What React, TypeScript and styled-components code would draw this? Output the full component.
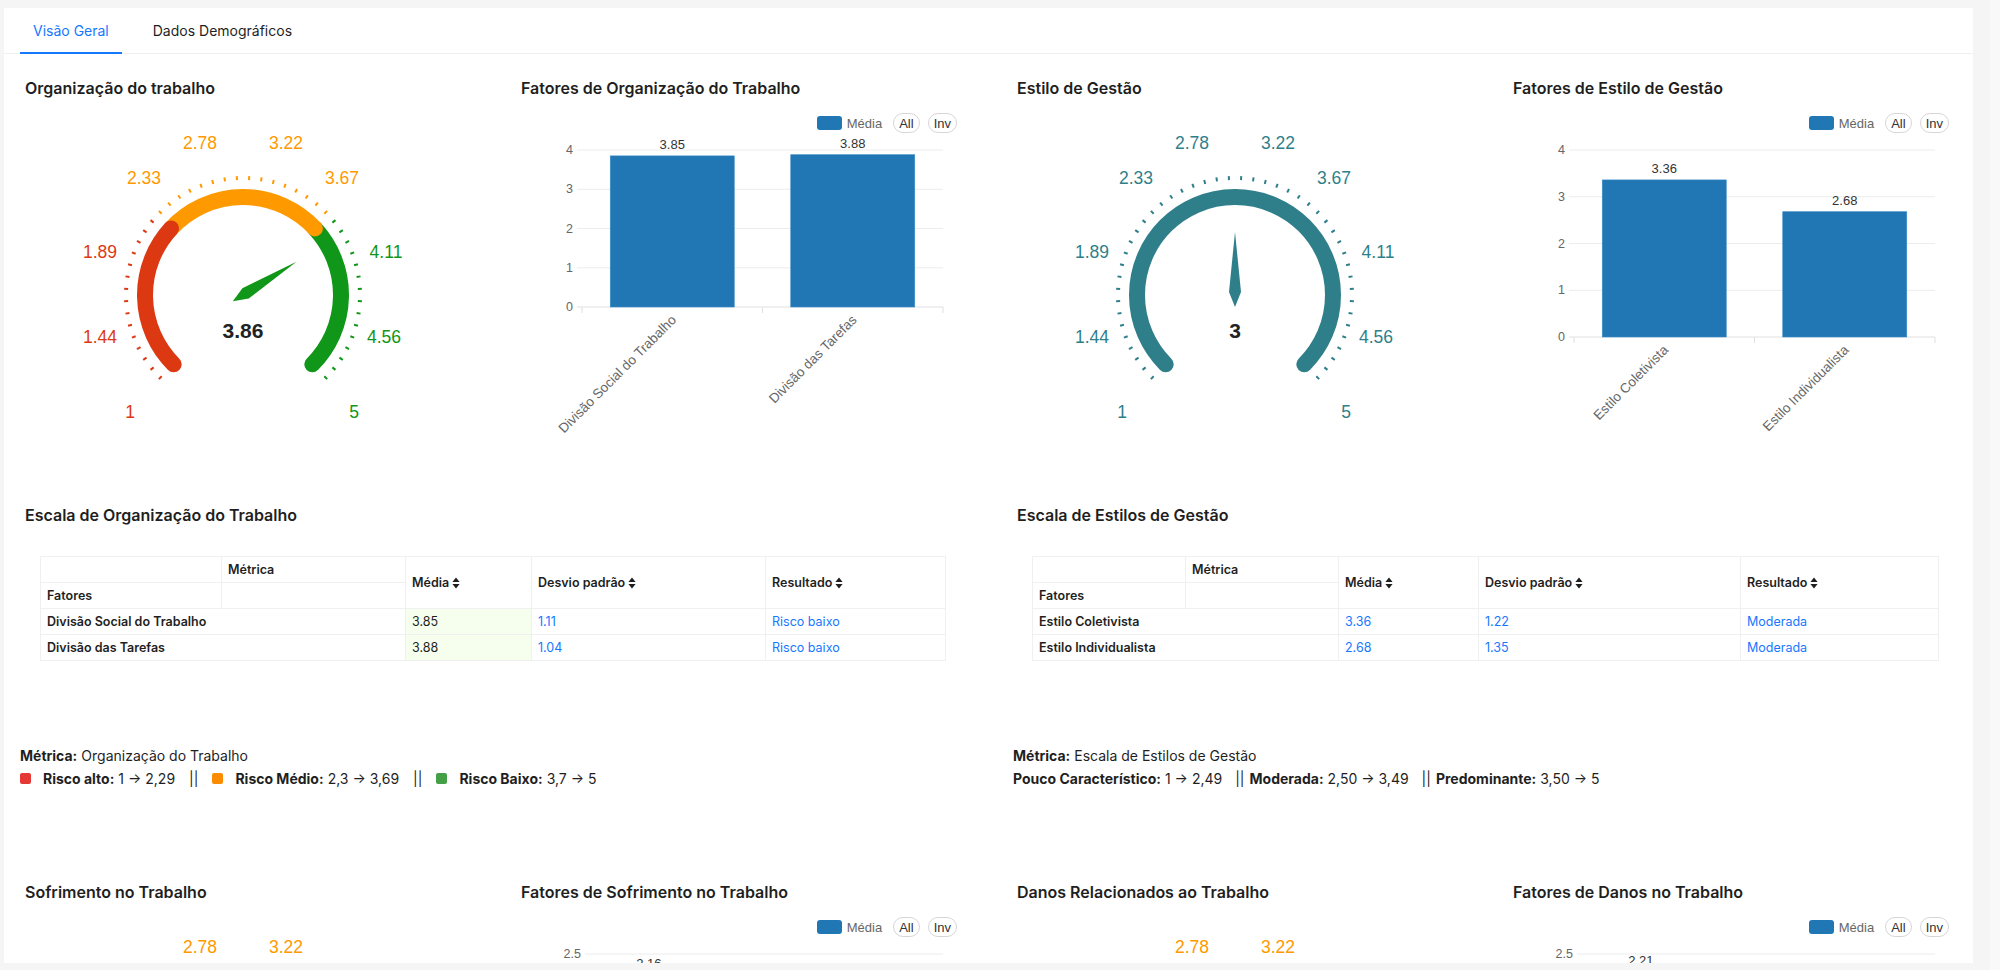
import React from "react";
import styled, { createGlobalStyle, css } from "styled-components";

const CHART_FONT = `"Liberation Sans", Arial, sans-serif`;

const GlobalStyle = createGlobalStyle`
  html, body {
    margin: 0;
    padding: 0;
    background: #f5f5f5;
    overflow: hidden;
  }
  body {
    font-family: Inter, "Liberation Sans", sans-serif;
    color: #1f1f1f;
  }
`;

const Page = styled.div`
  display: flex;
  height: 970px;
`;

const Card = styled.main`
  flex-shrink: 0;
  width: 1969px;
  height: 955px;
  margin: 8px 0 0 4px;
  background: #fff;
  overflow: hidden;
`;

const Gutter = styled.div`
  flex: 1;
`;

const ScrollTrack = styled.div`
  width: 10px;
  background: #f9f9f9;
`;

const TabBar = styled.nav`
  display: flex;
  gap: 18px;
  height: 46px;
  padding-left: 16px;
  border-bottom: 1px solid #f0f0f0;
  box-sizing: border-box;
`;

const Tab = styled.div<{ $active?: boolean }>`
  position: relative;
  display: flex;
  align-items: center;
  padding: 0 13px;
  font-size: 14px;
  color: ${(p) => (p.$active ? "#1677ff" : "#1f1f1f")};
  cursor: pointer;
  ${(p) =>
    p.$active &&
    css`
      &::after {
        content: "";
        position: absolute;
        left: 0;
        right: 0;
        bottom: -1px;
        height: 2px;
        background: #1677ff;
      }
    `}
`;

const Content = styled.div`
  padding: 23px 24px 0 21px;
`;

const Row = styled.section<{ $top: number }>`
  display: grid;
  grid-template-columns: repeat(4, 436px);
  column-gap: 60px;
  margin-top: ${(p) => p.$top}px;
`;

const Panel = styled.div`
  display: flex;
  flex-direction: column;
`;

const Wide = styled.div`
  grid-column: span 2;
`;

const Title = styled.h3`
  margin: 0;
  font-size: 16px;
  font-weight: 600;
  line-height: 22px;
  color: #1f1f1f;
  white-space: nowrap;
`;

const LegendRow = styled.div`
  display: flex;
  justify-content: flex-end;
  align-items: center;
  height: 20px;
  margin-top: 14px;
  font-family: ${CHART_FONT};
`;

const Swatch = styled.span`
  width: 25px;
  height: 14px;
  border-radius: 3px;
  background: #2176b4;
`;

const LegendLabel = styled.span`
  margin: 0 11px 0 5px;
  font-size: 13px;
  color: #666;
`;

const Pill = styled.button`
  height: 20px;
  padding: 0 5px;
  margin-left: 8px;
  border: 1px solid #d6d6d6;
  border-radius: 10px;
  background: #fff;
  font-family: ${CHART_FONT};
  font-size: 13px;
  color: #333;
  &:first-of-type {
    margin-left: 0;
  }
`;

const ChartSvg = styled.svg`
  display: block;
  overflow: visible;
`;

const Table = styled.table`
  border-collapse: collapse;
  margin: 30px 0 0 15px;
  font-size: 12.5px;
  table-layout: fixed;
`;

const Col = styled.col<{ $w: number }>`
  width: ${(p) => p.$w}px;
`;

const HeadCell = styled.th`
  height: 26px;
  padding: 0 6px;
  border: 1px solid #f0f0f0;
  text-align: left;
  font-weight: 600;
  color: #1f1f1f;
  white-space: nowrap;
  box-sizing: border-box;
`;

const Cell = styled.td<{ $tone?: "link" | "hit" | "name" }>`
  height: 26px;
  padding: 0 6px;
  border: 1px solid #f0f0f0;
  white-space: nowrap;
  box-sizing: border-box;
  color: ${(p) => (p.$tone === "link" ? "#1677ff" : "#1f1f1f")};
  font-weight: ${(p) => (p.$tone === "name" ? 600 : 400)};
  background: ${(p) => (p.$tone === "hit" ? "#f6ffed" : "#fff")};
`;

const SortWrap = styled.span`
  display: inline-flex;
  align-items: center;
  gap: 3px;
`;

const Note = styled.div<{ $shift: number }>`
  margin: 83px 0 0 ${(p) => p.$shift}px;
  font-size: 14px;
  line-height: 23px;
  white-space: nowrap;
  color: #1f1f1f;
`;

const NoteLine = styled.div`
  display: flex;
  align-items: center;
  b {
    font-weight: 700;
    margin-right: 4px;
  }
`;

const Sep = styled.span<{ $l: number; $r: number }>`
  margin: 0 ${(p) => p.$r}px 0 ${(p) => p.$l}px;
  color: #1f1f1f;
`;

const RiskSquare = styled.span<{ $c: string }>`
  display: inline-block;
  width: 11px;
  height: 11px;
  margin-right: 12px;
  border-radius: 2px;
  background: ${(p) => p.$c};
`;

type Seg = { to: number; color: string };

const RISK: Seg[] = [
  { to: 2.3, color: "#DC3912" },
  { to: 3.7, color: "#FF9900" },
  { to: 5, color: "#109618" },
];
const TEAL: Seg[] = [{ to: 5, color: "#2F7F8B" }];

const GAUGE_LABELS = ["1", "1.44", "1.89", "2.33", "2.78", "3.22", "3.67", "4.11", "4.56", "5"];
const LABEL_OFFSETS = [
  [-113, 117],
  [-143, 42],
  [-143, -43],
  [-99, -117],
  [-43, -152],
  [43, -152],
  [99, -117],
  [143, -43],
  [141, 42],
  [111, 117],
];

const angleOf = (v: number) => 225 - ((v - 1) / 4) * 270;

function polar(cx: number, cy: number, r: number, deg: number) {
  const a = (deg * Math.PI) / 180;
  return [cx + r * Math.cos(a), cy - r * Math.sin(a)];
}

function arcPath(cx: number, cy: number, r: number, v1: number, v2: number) {
  const a1 = angleOf(v1);
  const a2 = angleOf(v2);
  const [x1, y1] = polar(cx, cy, r, a1);
  const [x2, y2] = polar(cx, cy, r, a2);
  const large = a1 - a2 > 180 ? 1 : 0;
  return `M ${x1} ${y1} A ${r} ${r} 0 ${large} 1 ${x2} ${y2}`;
}

function colorFor(segs: Seg[], v: number) {
  return (segs.find((s) => v < s.to - 1e-6) ?? segs[segs.length - 1]).color;
}

function Gauge({ value, segs }: { value: number; segs: Seg[] }) {
  const cx = 218;
  const cy = 196;
  const a = (angleOf(value) * Math.PI) / 180;
  const d = [Math.cos(a), -Math.sin(a)];
  const p = [Math.sin(a), Math.cos(a)];
  const pt = (along: number, side: number) =>
    `${cx + d[0] * along + p[0] * side},${cy + d[1] * along + p[1] * side}`;
  const pointer = [pt(63, 0), pt(3, 6), pt(-12, 0), pt(3, -6)].join(" ");

  const ticks = Array.from({ length: 46 }, (_, k) => 1 + (k * 4) / 45);
  let from = 1;
  const arcs = segs.map((s) => {
    const seg = { from, to: s.to, color: s.color };
    from = s.to;
    return seg;
  });

  return (
    <ChartSvg width={436} height={380}>
      {[...arcs].reverse().map((s) => (
        <path
          key={s.to}
          d={arcPath(cx, cy, 98, s.from, s.to)}
          fill="none"
          stroke={s.color}
          strokeWidth={16}
          strokeLinecap="round"
        />
      ))}
      {ticks.map((v) => {
        const [x1, y1] = polar(cx, cy, 115, angleOf(v));
        const [x2, y2] = polar(cx, cy, 119, angleOf(v));
        return <line key={v} x1={x1} y1={y1} x2={x2} y2={y2} stroke={colorFor(segs, v)} strokeWidth={2} />;
      })}
      {GAUGE_LABELS.map((l, i) => (
        <text
          key={l}
          x={cx + LABEL_OFFSETS[i][0]}
          y={cy + LABEL_OFFSETS[i][1]}
          textAnchor="middle"
          dominantBaseline="central"
          fontFamily={CHART_FONT}
          fontSize={17.5}
          fill={colorFor(segs, parseFloat(l))}
        >
          {l}
        </text>
      ))}
      <polygon points={pointer} fill={colorFor(segs, value)} />
      <text
        x={cx}
        y={cy + 35}
        textAnchor="middle"
        dominantBaseline="central"
        fontFamily={CHART_FONT}
        fontSize={21}
        fontWeight={700}
        fill="#222"
      >
        {value}
      </text>
    </ChartSvg>
  );
}

type Bar = { label: string; value: number };
type ChartProps = { bars: Bar[]; max: number; step: number; zeroY: number; left: number };

function BarChart({ bars, max, step, zeroY, left }: ChartProps) {
  const top = 17;
  const right = 422;
  const y = (v: number) => zeroY - (v / max) * (zeroY - top);
  const cw = (right - left) / bars.length;
  const bw = Math.min(124, cw * 0.687);
  const ticks: number[] = [];
  for (let t = 0; t <= max + 1e-9; t += step) ticks.push(+t.toFixed(2));

  return (
    <ChartSvg width={436} height={346} fontFamily={CHART_FONT}>
      {ticks.map((t) => (
        <g key={t}>
          <line x1={left - 5} x2={right} y1={y(t)} y2={y(t)} stroke={t === 0 ? "#e0e0e0" : "#ececec"} />
          <text x={left - 9} y={y(t)} textAnchor="end" dominantBaseline="central" fontSize={12.5} fill="#666">
            {t}
          </text>
        </g>
      ))}
      {bars.map((_, i) => (
        <line key={i} x1={left + cw * i} x2={left + cw * i} y1={zeroY} y2={zeroY + 6} stroke="#e0e0e0" />
      ))}
      <line x1={right} x2={right} y1={zeroY} y2={zeroY + 6} stroke="#e0e0e0" />
      {bars.map((b, i) => {
        const c = left + cw * i + cw / 2;
        return (
          <g key={b.label}>
            <rect
              x={c - bw / 2}
              y={y(b.value)}
              width={bw}
              height={zeroY - y(b.value)}
              fill="#2176b4"
              stroke="#3a8cc6"
              strokeWidth={0.6}
            />
            <text x={c} y={y(b.value) - 7} textAnchor="middle" fontSize={13} fill="#333">
              {b.value.toFixed(2)}
            </text>
            <text
              transform={`translate(${c - 2} ${zeroY + 7}) rotate(-45)`}
              textAnchor="end"
              dominantBaseline="hanging"
              fontSize={13.5}
              fill="#666"
            >
              {b.label}
            </text>
          </g>
        );
      })}
    </ChartSvg>
  );
}

function ChartPanel({ title, ...chart }: ChartProps & { title: string }) {
  return (
    <Panel>
      <Title>{title}</Title>
      <LegendRow>
        <Swatch />
        <LegendLabel>Média</LegendLabel>
        <Pill>All</Pill>
        <Pill>Inv</Pill>
      </LegendRow>
      <BarChart {...chart} />
    </Panel>
  );
}

function GaugePanel({ title, value, segs }: { title: string; value: number; segs: Seg[] }) {
  return (
    <Panel>
      <Title>{title}</Title>
      <Gauge value={value} segs={segs} />
    </Panel>
  );
}

function SortIcon() {
  return (
    <svg width="8" height="12" viewBox="0 0 8 12">
      <path d="M4 0.6 L7.6 5 H0.4 Z M4 11.4 L7.6 7 H0.4 Z" fill="#1f1f1f" />
    </svg>
  );
}

function Sortable({ children }: { children: React.ReactNode }) {
  return (
    <SortWrap>
      {children}
      <SortIcon />
    </SortWrap>
  );
}

type ScaleRow = [string, string, string, string];

function ScaleTable({ widths, rows, highlight }: { widths: number[]; rows: ScaleRow[]; highlight?: boolean }) {
  return (
    <Table>
      <colgroup>
        {widths.map((w, i) => (
          <Col key={i} $w={w} />
        ))}
      </colgroup>
      <thead>
        <tr>
          <HeadCell />
          <HeadCell>Métrica</HeadCell>
          <HeadCell rowSpan={2}>
            <Sortable>Média</Sortable>
          </HeadCell>
          <HeadCell rowSpan={2}>
            <Sortable>Desvio padrão</Sortable>
          </HeadCell>
          <HeadCell rowSpan={2}>
            <Sortable>Resultado</Sortable>
          </HeadCell>
        </tr>
        <tr>
          <HeadCell>Fatores</HeadCell>
          <HeadCell />
        </tr>
      </thead>
      <tbody>
        {rows.map((r) => (
          <tr key={r[0]}>
            <Cell colSpan={2} $tone="name">
              {r[0]}
            </Cell>
            <Cell $tone={highlight ? "hit" : "link"}>{r[1]}</Cell>
            <Cell $tone="link">{r[2]}</Cell>
            <Cell $tone="link">{r[3]}</Cell>
          </tr>
        ))}
      </tbody>
    </Table>
  );
}

export default function App() {
  return (
    <>
      <GlobalStyle />
      <Page>
        <Card>
          <TabBar>
            <Tab $active>Visão Geral</Tab>
            <Tab>Dados Demográficos</Tab>
          </TabBar>
          <Content>
            <Row $top={0}>
              <GaugePanel title="Organização do trabalho" value={3.86} segs={RISK} />
              <ChartPanel
                title="Fatores de Organização do Trabalho"
                bars={[
                  { label: "Divisão Social do Trabalho", value: 3.85 },
                  { label: "Divisão das Tarefas", value: 3.88 },
                ]}
                max={4}
                step={1}
                zeroY={174}
                left={61}
              />
              <GaugePanel title="Estilo de Gestão" value={3} segs={TEAL} />
              <ChartPanel
                title="Fatores de Estilo de Gestão"
                bars={[
                  { label: "Estilo Coletivista", value: 3.36 },
                  { label: "Estilo Individualista", value: 2.68 },
                ]}
                max={4}
                step={1}
                zeroY={204}
                left={61}
              />
            </Row>

            <Row $top={25}>
              <Wide>
                <Title>Escala de Organização do Trabalho</Title>
                <ScaleTable
                  widths={[181, 184, 126, 234, 180]}
                  highlight
                  rows={[
                    ["Divisão Social do Trabalho", "3.85", "1.11", "Risco baixo"],
                    ["Divisão das Tarefas", "3.88", "1.04", "Risco baixo"],
                  ]}
                />
                <Note $shift={-5}>
                  <NoteLine>
                    <b>Métrica:</b> Organização do Trabalho
                  </NoteLine>
                  <NoteLine>
                    <RiskSquare $c="#e53935" />
                    <b>Risco alto:</b> 1 → 2,29
                    <Sep $l={14} $r={14}>||</Sep>
                    <RiskSquare $c="#fb8c00" />
                    <b>Risco Médio:</b> 2,3 → 3,69
                    <Sep $l={14} $r={14}>||</Sep>
                    <RiskSquare $c="#43a047" />
                    <b>Risco Baixo:</b> 3,7 → 5
                  </NoteLine>
                </Note>
              </Wide>
              <Wide>
                <Title>Escala de Estilos de Gestão</Title>
                <ScaleTable
                  widths={[153, 153, 140, 262, 198]}
                  rows={[
                    ["Estilo Coletivista", "3.36", "1.22", "Moderada"],
                    ["Estilo Individualista", "2.68", "1.35", "Moderada"],
                  ]}
                />
                <Note $shift={-4}>
                  <NoteLine>
                    <b>Métrica:</b> Escala de Estilos de Gestão
                  </NoteLine>
                  <NoteLine>
                    <b>Pouco Característico:</b> 1 → 2,49
                    <Sep $l={13} $r={5}>||</Sep>
                    <b>Moderada:</b> 2,50 → 3,49
                    <Sep $l={13} $r={5}>||</Sep>
                    <b>Predominante:</b> 3,50 → 5
                  </NoteLine>
                </Note>
              </Wide>
            </Row>

            <Row $top={91}>
              <GaugePanel title="Sofrimento no Trabalho" value={2.45} segs={RISK} />
              <ChartPanel
                title="Fatores de Sofrimento no Trabalho"
                bars={[
                  { label: "Falta de Sentido do Trabalho", value: 2.16 },
                  { label: "Esgotamento Mental", value: 1.87 },
                  { label: "Falta de Reconhecimento", value: 1.54 },
                ]}
                max={2.5}
                step={0.5}
                zeroY={171}
                left={69}
              />
              <GaugePanel title="Danos Relacionados ao Trabalho" value={1.92} segs={RISK} />
              <ChartPanel
                title="Fatores de Danos no Trabalho"
                bars={[
                  { label: "Danos Psicológicos", value: 2.21 },
                  { label: "Danos Sociais", value: 1.62 },
                  { label: "Danos Físicos", value: 1.48 },
                ]}
                max={2.5}
                step={0.5}
                zeroY={171}
                left={69}
              />
            </Row>
          </Content>
        </Card>
        <Gutter />
        <ScrollTrack />
      </Page>
    </>
  );
}
